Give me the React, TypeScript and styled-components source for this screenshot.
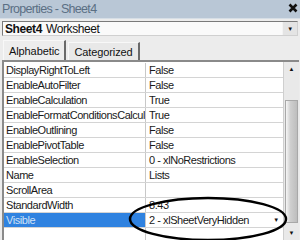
import styled, { createGlobalStyle } from 'styled-components';

const Global = createGlobalStyle`
  html, body {
    margin: 0;
    padding: 0;
    background: #ebebeb;
  }
  body {
    font-family: 'Liberation Sans', Arial, sans-serif;
  }
`;

const Window = styled.div`
  position: relative;
  width: 300px;
  height: 240px;
  overflow: hidden;
  background: #ececec;
  display: flex;
  flex-direction: column;
`;

const TitleBar = styled.div`
  height: 18px;
  flex: none;
  background: #b9c7d6;
  display: flex;
  align-items: center;
  justify-content: space-between;
  padding: 0 2px 0 2px;
  border-bottom: 1px solid #d6dee6;
`;

const Title = styled.span`
  font-size: 12.5px;
  letter-spacing: -0.7px;
  color: #5b6f84;
`;

const Close = styled.svg`
  margin-top: -2px;
`;

const Combo = styled.div`
  margin: 2px 2px 0 2px;
  height: 13px;
  flex: none;
  background: #fafafa;
  border: 1px solid #7a7a7a;
  border-right-color: #d0d0d0;
  border-bottom-color: #d0d0d0;
  display: flex;
  align-items: center;
  padding-left: 2px;
  font-size: 12px;
  letter-spacing: -0.4px;
  color: #111;
  b {
    margin-right: 4px;
  }
`;

const ComboText = styled.span`
  flex: 1;
`;

const ArrowButton = styled.span<{ $w: number; $flat?: boolean }>`
  width: ${({ $w }) => $w}px;
  align-self: stretch;
  background: ${({ $flat }) => ($flat ? '#fff' : '#e4e4e4')};
  border-left: ${({ $flat }) => ($flat ? 'none' : '1px solid #f4f4f4')};
  display: flex;
  align-items: center;
  justify-content: center;
  font-size: 6px;
  color: #111;
`;

const TabRow = styled.div`
  display: flex;
  align-items: flex-end;
  height: 20px;
  margin-top: 4px;
  padding-left: 3px;
  flex: none;
`;

const Tab = styled.div<{ $active?: boolean }>`
  height: ${({ $active }) => ($active ? 19 : 17)}px;
  padding: 0 5px 0 5px;
  margin-right: 2px;
  display: flex;
  align-items: center;
  font-size: 11px;
  letter-spacing: -0.1px;
  color: #111;
  background: ${({ $active }) => ($active ? '#ededed' : '#e8e8e8')};
  border: 1px solid #f8f8f8;
  border-right: 2px solid #6a6a6a;
  border-bottom: none;
`;

const Grid = styled.div`
  flex: 1;
  margin: 0 1px 0 2px;
  display: flex;
  border-top: 2px solid #8a8a8a;
  border-left: 2px solid #8a8a8a;
  overflow: hidden;
`;

const Rows = styled.div`
  flex: 1;
  background: #fff;
  padding-top: 1px;
`;

const Row = styled.div`
  display: grid;
  grid-template-columns: 142px 1fr;
  height: 14px;
  border-bottom: 1px solid #d4d4d4;
  font-size: 11px;
  letter-spacing: -0.45px;
  color: #1a1a1a;
`;

const NameCell = styled.div<{ $selected?: boolean }>`
  padding-left: 2px;
  line-height: 14px;
  white-space: nowrap;
  overflow: hidden;
  text-overflow: clip;
  border-right: 1px solid #c8c8c8;
  background: ${({ $selected }) => ($selected ? '#2f82e0' : '#fff')};
  color: ${({ $selected }) => ($selected ? '#cfe1f7' : '#1a1a1a')};
`;

const ValueCell = styled.div`
  padding-left: 3px;
  line-height: 14px;
  white-space: nowrap;
  overflow: hidden;
  display: flex;
`;

const ScrollBar = styled.div`
  width: 15px;
  flex: none;
  background: #e9e9e9;
  border-left: 1px solid #cfcfcf;
  display: flex;
  flex-direction: column;
`;

const ScrollButton = styled.div`
  height: 14px;
  display: flex;
  align-items: center;
  justify-content: center;
  font-size: 6px;
  color: #111;
  flex: none;
`;

const Track = styled.div`
  flex: 1;
  display: flex;
  flex-direction: column;
  padding-top: 24px;
`;

const Thumb = styled.div`
  flex: 1;
  margin: 0 1px 3px 1px;
  background: linear-gradient(90deg, #f6f6f6, #cfcfcf 40%, #bdbdbd);
  border: 1px solid #a8a8a8;
`;

const Oval = styled.svg`
  position: absolute;
  left: 0;
  top: 0;
  pointer-events: none;
`;

const props: [string, string][] = [
  ['DisplayRightToLeft', 'False'],
  ['EnableAutoFilter', 'False'],
  ['EnableCalculation', 'True'],
  ['EnableFormatConditionsCalculation', 'True'],
  ['EnableOutlining', 'False'],
  ['EnablePivotTable', 'False'],
  ['EnableSelection', '0 - xlNoRestrictions'],
  ['Name', 'Lists'],
  ['ScrollArea', ''],
  ['StandardWidth', '8.43'],
];

export default function App() {
  return (
    <>
      <Global />
      <Window>
        <TitleBar>
          <Title>Properties - Sheet4</Title>
          <Close width="10" height="10" viewBox="0 0 10 10">
            <path d="M1.5 1.5 L8.5 8.5 M8.5 1.5 L1.5 8.5" stroke="#111" strokeWidth="2.6" />
          </Close>
        </TitleBar>
        <Combo>
          <ComboText>
            <b>Sheet4</b>Worksheet
          </ComboText>
          <ArrowButton $w={14}>▼</ArrowButton>
        </Combo>
        <TabRow>
          <Tab $active>Alphabetic</Tab>
          <Tab>Categorized</Tab>
        </TabRow>
        <Grid>
          <Rows>
            {props.map(([name, value]) => (
              <Row key={name}>
                <NameCell>{name}</NameCell>
                <ValueCell>{value}</ValueCell>
              </Row>
            ))}
            <Row>
              <NameCell $selected>Visible</NameCell>
              <ValueCell>
                <ComboText>2 - xlSheetVeryHidden</ComboText>
                <ArrowButton $w={14} $flat>▼</ArrowButton>
              </ValueCell>
            </Row>
            <Row>
              <NameCell />
              <ValueCell />
            </Row>
          </Rows>
          <ScrollBar>
            <ScrollButton>▲</ScrollButton>
            <Track>
              <Thumb />
            </Track>
            <ScrollButton>▼</ScrollButton>
          </ScrollBar>
        </Grid>
        <Oval width="300" height="240" viewBox="0 0 300 240">
          <ellipse cx="208" cy="219" rx="78" ry="21" fill="none" stroke="#000" strokeWidth="2.5" />
        </Oval>
      </Window>
    </>
  );
}
